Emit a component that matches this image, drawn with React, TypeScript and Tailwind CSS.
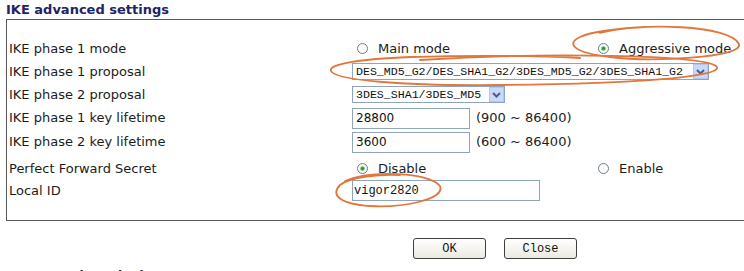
import type {ReactNode} from 'react';

function Radio({checked = false}: {checked?: boolean}) {
  return (
    <svg width="11" height="11" viewBox="0 0 11 11" className="shrink-0">
      <circle cx="5.5" cy="5.5" r="5" fill="#fbfbfb" stroke="#6f7d8a" strokeWidth="1" />
      {checked && (
        <>
          <circle cx="5.5" cy="5.5" r="2.6" fill="#9fdc9f" />
          <circle cx="5.5" cy="5.5" r="1.7" fill="#2f9a34" />
        </>
      )}
    </svg>
  );
}

function RadioOption({checked, label}: {checked?: boolean; label: string}) {
  return (
    <span className="flex items-center gap-[10px] pl-[5px]">
      <Radio checked={checked} />
      <span>{label}</span>
    </span>
  );
}

function DropArrow() {
  return (
    <svg width="15" height="15" viewBox="0 0 15 15" className="shrink-0">
      <rect x="0.5" y="0.5" width="14" height="14" fill="#c9d8fb" stroke="#b3c6f2" />
      <path d="M4 6 L7.5 9.5 L11 6" fill="none" stroke="#4b5f8e" strokeWidth="2" />
    </svg>
  );
}

function SelectBox({value, width}: {value: string; width: string}) {
  return (
    <div className={`${width} h-[17px] flex items-center justify-between gap-[2px] border border-[#8fa5bd] bg-white pl-[3px] font-['Liberation_Mono',monospace] text-[11.6px] leading-[15px] text-[#111]`}>
      <span className="min-w-0 overflow-hidden whitespace-nowrap">{value}</span>
      <DropArrow />
    </div>
  );
}

function TextBox({value, width, mono = false}: {value: string; width: string; mono?: boolean}) {
  return (
    <div
      className={`${width} h-[21px] flex items-center border border-[#8fa5bd] bg-white ${
        mono ? "pl-[1px] font-['Liberation_Mono',monospace] text-[12px]" : 'pl-[3px] text-[12px]'
      } text-[#111]`}
    >
      {value}
    </div>
  );
}

function Row({label, height, children}: {label: string; height: string; children: ReactNode}) {
  return (
    <div className={`flex items-center ${height}`}>
      <div className="w-[343px] shrink-0">{label}</div>
      <div className="flex items-center">{children}</div>
    </div>
  );
}

function XpButton({label}: {label: string}) {
  return (
    <button className="w-[73px] h-[21px] rounded-[3px] border border-[#3f3f3f] bg-gradient-to-b from-white to-[#ebe9e0] font-['Liberation_Mono',monospace] text-[12px] text-[#111]">
      {label}
    </button>
  );
}

export default function App() {
  return (
    <div className="relative w-[744px] h-[271px] overflow-hidden bg-white font-['DejaVu_Sans',sans-serif] text-[13px] text-[#1c1c1c]">
      <div className="h-[19px] pl-[6px] pt-[1px] leading-[18px] font-bold text-[#1e2466]">IKE advanced settings</div>

      <div className="ml-[6px] w-[780px] border border-[#5a5a5a] pt-[17px] pb-[19px] pl-[2px]">
        <Row label="IKE phase 1 mode" height="h-[23px]">
          <div className="w-[241px]">
            <RadioOption label="Main mode" />
          </div>
          <RadioOption checked label="Aggressive mode" />
        </Row>
        <Row label="IKE phase 1 proposal" height="h-[23px]">
          <SelectBox width="w-[357px]" value="DES_MD5_G2/DES_SHA1_G2/3DES_MD5_G2/3DES_SHA1_G2" />
        </Row>
        <Row label="IKE phase 2 proposal" height="h-[23px]">
          <SelectBox width="w-[153px]" value="3DES_SHA1/3DES_MD5" />
        </Row>
        <Row label="IKE phase 1 key lifetime" height="h-[24px]">
          <TextBox width="w-[118px]" value="28800" />
          <span className="ml-[6px]">(900 ~ 86400)</span>
        </Row>
        <Row label="IKE phase 2 key lifetime" height="h-[24px]">
          <TextBox width="w-[118px]" value="3600" />
          <span className="ml-[6px]">(600 ~ 86400)</span>
        </Row>
        <Row label="Perfect Forward Secret" height="h-[26px] pt-[3px]">
          <div className="w-[241px]">
            <RadioOption checked label="Disable" />
          </div>
          <RadioOption label="Enable" />
        </Row>
        <Row label="Local ID" height="h-[21px]">
          <TextBox width="w-[188px]" value="vigor2820" mono />
        </Row>
      </div>

      <div className="mt-[17px] flex gap-[18px] pl-[413px]">
        <XpButton label="OK" />
        <XpButton label="Close" />
      </div>

      <div className="mt-[10px] pl-[18px] text-[12px] font-bold leading-[14px] text-[#222]">• IKE Auth Method</div>

      <svg className="pointer-events-none absolute left-0 top-0" width="744" height="271" viewBox="0 0 744 271" fill="none">
        <g stroke="#e2773c" strokeWidth="1.8" strokeLinecap="round">
          <path d="M600 33 C640 22, 730 25, 739 44 C744 58, 650 62, 610 57 C575 53, 565 44, 580 37 C590 32, 620 28, 645 27" />
          <path d="M420 60 C550 52, 700 55, 716 66 C728 76, 640 84, 500 85 C400 86, 335 80, 331 71 C328 64, 360 59, 410 57 C480 55, 540 56, 580 58" />
          <path d="M345 181 C370 170, 430 172, 440 186 C446 200, 400 208, 370 206 C340 204, 330 195, 340 185 C350 177, 380 174, 400 175" />
        </g>
      </svg>
    </div>
  );
}
